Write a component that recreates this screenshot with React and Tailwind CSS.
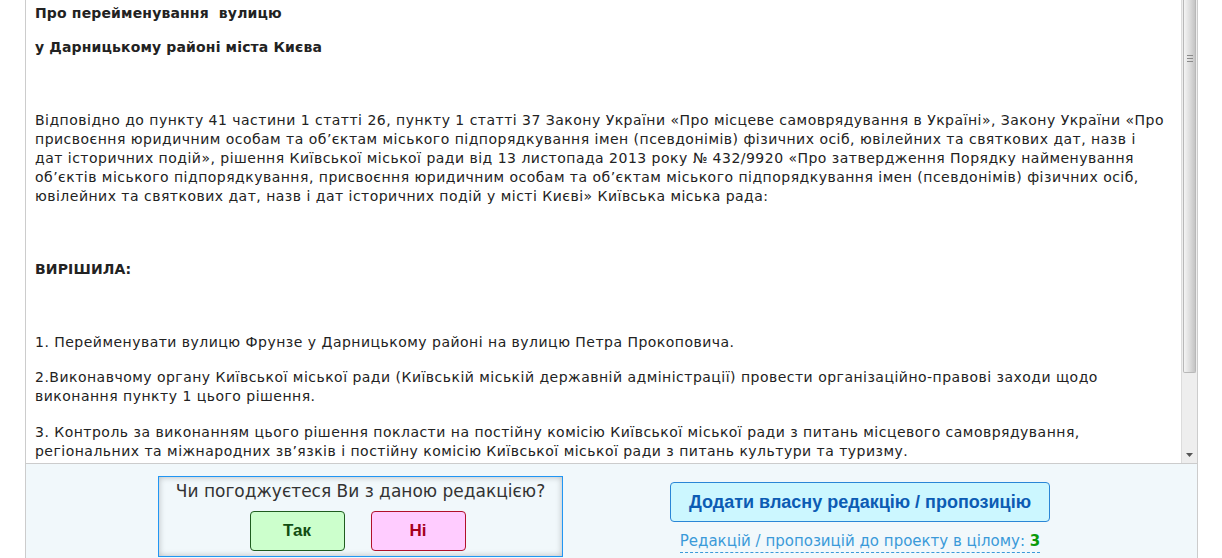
import React from "react";

const body = { fontFamily: '"DejaVu Sans", Verdana, sans-serif' };
const arial = { fontFamily: '"Liberation Sans", Arial, sans-serif' };

const Scrollbar = () => (
  <div className="w-[16px] shrink-0 bg-[#eeeeee] border-l border-[#dcdcdc] flex flex-col">
    {/* thumb, its top is scrolled out of view */}
    <div className="mx-[1px] h-[373px] rounded-b-[2px] border border-t-0 border-[#b8b8b8] bg-gradient-to-r from-[#f4f4f4] via-[#dedede] to-[#c4c4c4] flex items-start justify-center pt-[55px]">
      <div className="flex flex-col gap-[2px]">
        <div className="w-[6px] h-[1px] bg-[#8a8a8a]" />
        <div className="w-[6px] h-[1px] bg-[#8a8a8a]" />
        <div className="w-[6px] h-[1px] bg-[#8a8a8a]" />
      </div>
    </div>
    <div className="flex-1 flex items-end justify-center pb-[6px]">
      <svg width="7" height="4" viewBox="0 0 7 4">
        <path d="M0 0H7L3.5 4Z" fill="#555" />
      </svg>
    </div>
  </div>
);

export default function App() {
  return (
    <div className="w-[1222px] h-[558px] overflow-hidden bg-white flex">
      <div className="w-[25px] shrink-0" />
      <div className="w-[1173px] shrink-0 border-l border-r border-[#cccccc] flex flex-col">
        {/* document text */}
        <div className="h-[464px] shrink-0 flex border-b border-[#cccccc]">
          <div
            className="flex-1 overflow-hidden pl-[9px] pt-[4px] text-[14px] leading-[19px] tracking-[0.48px] text-[#222222] whitespace-nowrap"
            style={body}
          >
            <p className="font-bold tracking-[0.15px] mb-[15px]">Про перейменування&nbsp; вулицю</p>
            <p className="font-bold tracking-[0.15px] mb-[54px]">у Дарницькому районі міста Києва</p>
            <p className="mb-[54px]">
              Відповідно до пункту 41 частини 1 статті 26, пункту 1 статті 37 Закону України «Про місцеве самоврядування в Україні», Закону України «Про
              <br />
              присвоєння юридичним особам та об’єктам міського підпорядкування імен (псевдонімів) фізичних осіб, ювілейних та святкових дат, назв і
              <br />
              дат історичних подій», рішення Київської міської ради від 13 листопада 2013 року № 432/9920 «Про затвердження Порядку найменування
              <br />
              об’єктів міського підпорядкування, присвоєння юридичним особам та об’єктам міського підпорядкування імен (псевдонімів) фізичних осіб,
              <br />
              ювілейних та святкових дат, назв і дат історичних подій у місті Києві» Київська міська рада:
            </p>
            <p className="font-bold tracking-[0.15px] mb-[54px]">ВИРІШИЛА:</p>
            <p className="mb-[16px]">
              1. Перейменувати вулицю Фрунзе у Дарницькому районі на вулицю Петра Прокоповича.
            </p>
            <p className="mb-[17px]">
              2.Виконавчому органу Київської міської ради (Київській міській державній адміністрації) провести організаційно-правові заходи щодо
              <br />
              виконання пункту 1 цього рішення.
            </p>
            <p className="mb-[16px]">
              3. Контроль за виконанням цього рішення покласти на постійну комісію Київської міської ради з питань місцевого самоврядування,
              <br />
              регіональних та міжнародних зв’язків і постійну комісію Київської міської ради з питань культури та туризму.
            </p>
          </div>
          <Scrollbar />
        </div>

        {/* vote panel */}
        <div className="flex-1 bg-[#f1f8fb] flex items-start">
          <div className="w-[132px] shrink-0" />
          <div className="mt-[12px] w-[405px] h-[81px] shrink-0 border border-[#2196f3] shadow-[inset_0_0_6px_rgba(0,0,0,0.25)] flex flex-col items-center">
            <div className="mt-[3px] text-[17px] leading-[22px] text-[#333333]" style={body}>
              Чи погоджуєтеся Ви з даною редакцією?
            </div>
            <div className="mt-[9px] mr-[6px] flex gap-[26px]">
              <button
                className="w-[95px] h-[40px] rounded-[4px] bg-[#ccffcc] border border-[#1f5c1f] text-[#124d12] font-bold text-[17px]"
                style={arial}
              >
                Так
              </button>
              <button
                className="w-[95px] h-[40px] rounded-[4px] bg-[#ffccff] border border-[#b0102a] text-[#a5001c] font-bold text-[17px]"
                style={arial}
              >
                Ні
              </button>
            </div>
          </div>
          <div className="ml-[107px] mt-[18px] flex flex-col items-center">
            <button
              className="w-[380px] h-[40px] rounded-[4px] bg-[#ccf7ff] border border-[#2a86d6] text-[#0c5cb4] font-bold text-[18px]"
              style={arial}
            >
              Додати власну редакцію / пропозицію
            </button>
            <div
              className="mt-[9px] text-[15px] leading-[21px] text-[#3a9ad9] border-b border-dashed border-[#3a9ad9]"
              style={body}
            >
              Редакцій / пропозицій до проекту в цілому: <span className="font-bold text-[#0a9a0a]">3</span>
            </div>
          </div>
        </div>
      </div>
    </div>
  );
}
